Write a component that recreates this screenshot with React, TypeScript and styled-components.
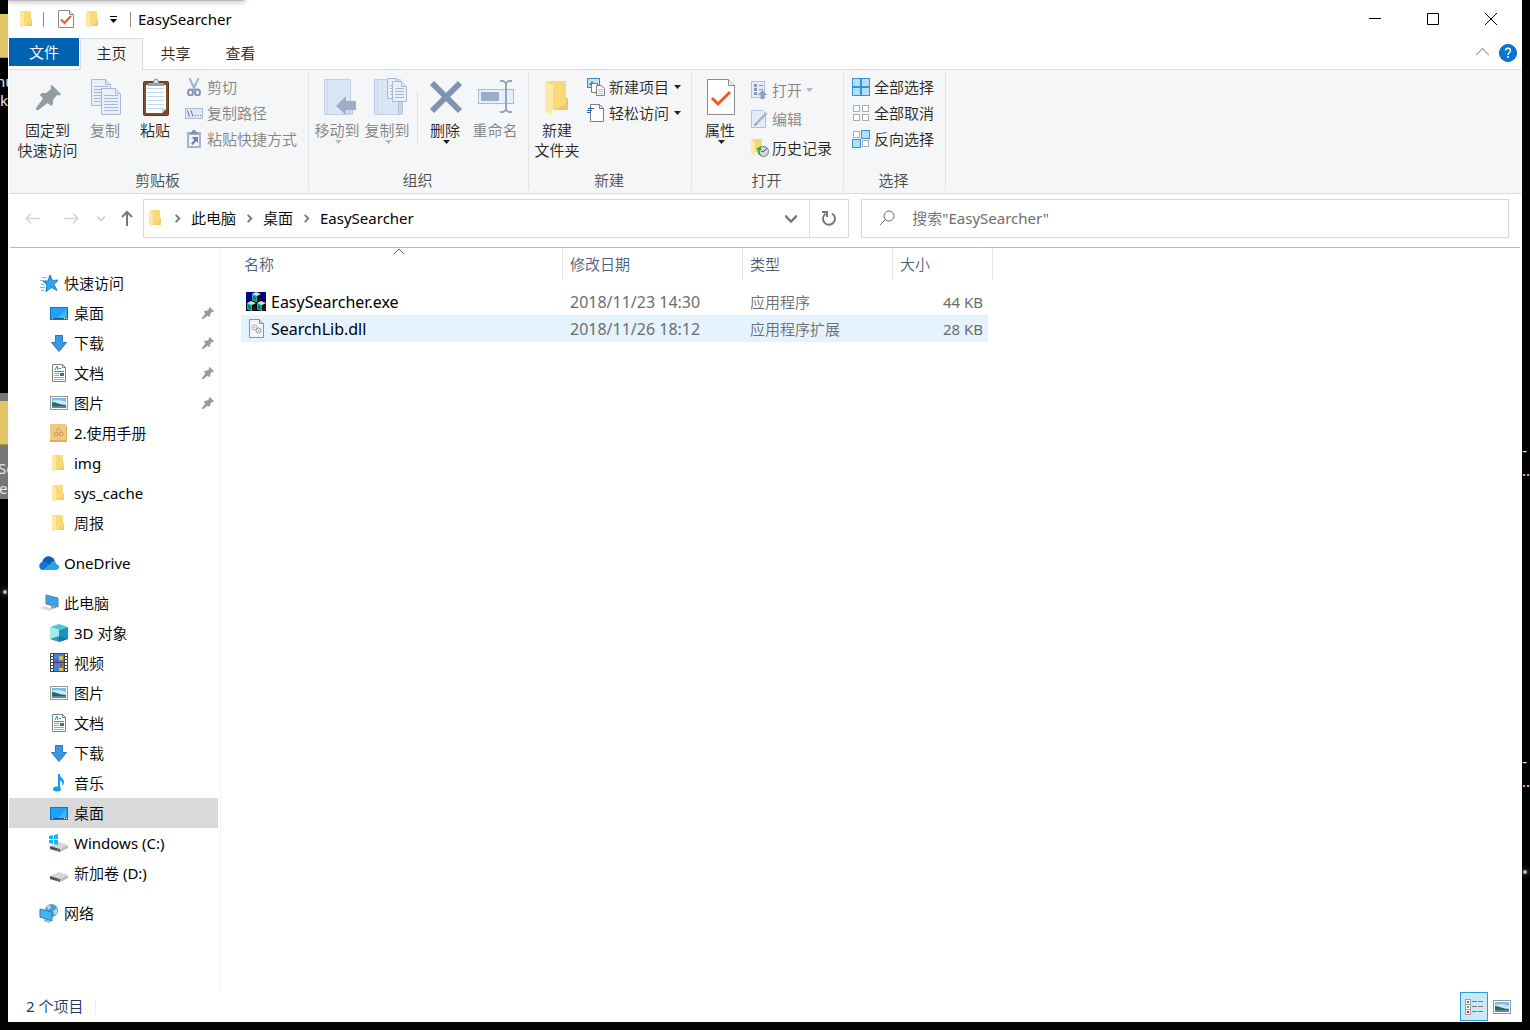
import React from "react";
import styled, { createGlobalStyle, css } from "styled-components";

const Global = createGlobalStyle`
  * { box-sizing: border-box; }
  body {
    margin: 0;
    background: #000;
    font-family: "Noto Sans", "Noto Sans CJK SC DemiLight", "Noto Sans CJK SC Light", "Noto Sans CJK SC", sans-serif;
    font-size: 15px;
    line-height: 20px;
    color: #000;
  }
  button, input { font: inherit; color: inherit; }
  button { border: 0; padding: 0; background: transparent; }
  svg { display: block; flex: none; }
`;

/* ---------- desktop ---------- */

const Desktop = styled.div`
  position: relative;
  display: flex;
  min-height: 100vh;
  padding: 0 8px 8px;
  overflow: hidden;
  background: #020203;
`;

const DesktopFolder = styled.div<{ $top: number; $height: number; $selected?: boolean }>`
  position: absolute;
  left: 0;
  top: ${(p) => p.$top}px;
  width: 40px;
  height: ${(p) => p.$height}px;
  padding-top: ${(p) => (p.$selected ? 8 : 0)}px;
  background: ${(p) => (p.$selected ? "#777" : "transparent")};
  &::before {
    content: "";
    display: block;
    height: 43px;
    background: #e3c467;
    border-bottom: 1px solid #b8983e;
  }
`;

const DesktopText = styled.span<{ $top: number; $side: "left" | "right"; $shift: number }>`
  position: absolute;
  top: ${(p) => p.$top}px;
  ${(p) => (p.$side === "left" ? `left: ${p.$shift}px;` : `right: ${p.$shift}px;`)}
  color: #e8e8e8;
`;

const Star = styled.i<{ $top: number; $side: "left" | "right" }>`
  position: absolute;
  ${(p) => p.$side}: 3px;
  top: ${(p) => p.$top}px;
  width: 4px;
  height: 4px;
  border-radius: 50%;
  background: #aeb8b4;
  box-shadow: 0 0 5px 1px #4d5a57;
`;

const Window = styled.main`
  position: relative;
  display: flex;
  flex-direction: column;
  flex: 1;
  min-width: 0;
  padding: 0 1px;
  background: #fff;
`;

/* ---------- title bar ---------- */

const TitleBar = styled.header`
  display: flex;
  justify-content: space-between;
  height: 38px;
  padding-right: 1px;
`;

const TopShade = styled.div`
  position: absolute;
  top: 0;
  left: 0;
  width: 236px;
  height: 1px;
  background: #bbb;
  box-shadow: 0 0 5px 1px #aaa;
  clip-path: inset(0 -6px -6px 0);
`;

const TitleLeft = styled.div`
  display: flex;
  align-items: center;
  gap: 11px;
  padding-left: 11px;
`;

const QuickTools = styled.div`
  display: flex;
  align-items: center;
  gap: 12px;
  padding: 0 2px 0 3px;
`;

const TitleRule = styled.span`
  width: 1px;
  height: 15px;
  background: #8c8c8c;
`;

const WindowTitle = styled.h1`
  margin: 0 0 0 -4px;
  font-size: 15px;
  font-weight: 400;
`;

const Caption = styled.button`
  display: inline-flex;
  align-items: center;
  justify-content: center;
  width: 58px;
  height: 38px;
`;

/* ---------- tabs ---------- */

const Tabs = styled.nav`
  display: flex;
  height: 32px;
  border-bottom: 1px solid #dadbdc;
  color: #262626;
`;

const FileTab = styled.button`
  width: 70px;
  height: 28px;
  margin-right: 1px;
  background: #0063b1;
  color: #fff;
`;

const Tab = styled.button<{ $active?: boolean }>`
  width: ${(p) => (p.$active ? 63 : 65)}px;
  height: 32px;
  padding-bottom: 3px;
  ${(p) =>
    p.$active &&
    css`
      background: #f5f6f7;
      border: 1px solid #dadbdc;
      border-bottom: 0;
    `}
`;

const TabTools = styled.div`
  display: flex;
  align-items: center;
  gap: 10px;
  margin-left: auto;
  padding: 0 4px 2px 0;
`;

/* ---------- ribbon ---------- */

const Ribbon = styled.section`
  display: flex;
  height: 124px;
  padding: 0 0 3px;
  background: #f5f6f7;
  border-bottom: 1px solid #dadbdc;
  color: #262626;
`;

const Group = styled.div<{ $left: number; $right: number }>`
  display: flex;
  flex-direction: column;
  justify-content: space-between;
  margin-top: 2px;
  border-right: 1px solid #e2e3e4;
  & > div {
    padding-left: ${(p) => p.$left}px;
    padding-right: ${(p) => p.$right}px;
  }
`;

const GroupBody = styled.div`
  display: flex;
  margin-top: -2px;
`;

const GroupName = styled.p`
  margin: 0;
  padding-right: 2px;
  text-align: center;
  color: #4c4c4c;
`;

const Big = styled.button<{ $w?: number }>`
  position: relative;
  display: flex;
  flex-direction: column;
  align-items: center;
  gap: 2px;
  width: ${(p) => p.$w ?? 50}px;
  padding-top: 8px;
  white-space: pre;
  &:disabled { color: #838383; }
`;

const BigArrow = styled.span`
  position: absolute;
  top: 70px;
  left: 23px;
  color: #222;
  button:disabled & { color: #b8b8b8; }
`;

const SmallCol = styled.div<{ $row?: number; $top?: number; $left?: number; $gap?: number }>`
  display: grid;
  grid-auto-rows: ${(p) => p.$row ?? 26}px;
  align-content: start;
  padding-top: ${(p) => p.$top ?? 4}px;
  padding-left: ${(p) => p.$left ?? 5}px;
  & > button { gap: ${(p) => p.$gap ?? 4}px; }
`;

const Small = styled.button`
  display: flex;
  align-items: center;
  white-space: nowrap;
  &:disabled { color: #838383; }
`;

const Arrow = styled.span`
  margin-left: 1px;
  color: #222;
  button:disabled & { color: #b8b8b8; }
`;

const InnerRule = styled.span`
  width: 1px;
  height: 54px;
  margin: 21px 2px 0 5px;
  background: #e2e3e4;
`;

/* ---------- address ---------- */

const AddressRow = styled.div`
  display: flex;
  align-items: center;
  height: 54px;
  padding: 0 11px 5px 0;
  border-bottom: 1px solid #b9b9b9;
  margin: 0 1px;
`;

const NavButtons = styled.div`
  display: flex;
  align-items: center;
  width: 133px;
  padding-left: 15px;
`;

const NavButton = styled.button<{ $before?: number }>`
  margin-left: ${(p) => p.$before ?? 0}px;
`;

const Box = styled.div<{ $grow: number }>`
  display: flex;
  align-items: center;
  flex: ${(p) => p.$grow} 1 0;
  min-width: 0;
  height: 39px;
  border: 1px solid #d9d9d9;
`;

const Crumbs = styled.div`
  display: flex;
  align-items: center;
  flex: 1;
  gap: 9px;
  padding-left: 5px;
  & > svg:first-child { margin-right: 3px; }
`;

const Crumb = styled.a`
  color: #000;
  text-decoration: none;
`;

const BoxButton = styled.button<{ $rule?: boolean }>`
  display: flex;
  align-items: center;
  justify-content: center;
  width: ${(p) => (p.$rule ? 39 : 36)}px;
  height: 37px;
  border-left: ${(p) => (p.$rule ? "1px solid #d9d9d9" : "0")};
`;

const SearchBox = styled(Box)`
  margin-left: 12px;
  gap: 16px;
  & > svg { margin-left: 16px; }
`;

const SearchInput = styled.input`
  flex: 1;
  min-width: 0;
  border: 0;
  padding: 0;
  outline: 0;
  background: transparent;
  &::placeholder { color: #6d6d6d; opacity: 1; }
`;

/* ---------- body ---------- */

const Body = styled.div`
  display: flex;
  flex: 1;
`;

const Side = styled.aside`
  display: flex;
  flex-direction: column;
  gap: 10px;
  width: 212px;
  padding: 20px 2px 0 0;
  border-right: 1px solid #f2f2f2;
`;

const Tree = styled.ul`
  margin: 0;
  padding: 0;
  list-style: none;
`;

const TreeLink = styled.a<{ $root?: boolean; $selected?: boolean }>`
  display: flex;
  align-items: center;
  gap: 5px;
  height: 30px;
  padding: 0 4px 0 ${(p) => (p.$root ? 30 : 40)}px;
  background: ${(p) => (p.$selected ? "#d9d9d9" : "transparent")};
  color: #000;
  text-decoration: none;
  & > span { flex: 1; }
`;

const Files = styled.section`
  flex: 1;
  padding-left: 20px;
`;

const Table = styled.table`
  display: block;
  text-align: left;
  color: #6d6d6d;
  thead, tbody { display: block; }
  tbody { padding-top: 8px; }
`;

const Row = styled.tr<{ $head?: boolean; $hot?: boolean }>`
  display: grid;
  grid-template-columns: 322px 180px 150px ${(p) => (p.$head ? 100 : 95)}px;
  width: max-content;
  height: ${(p) => (p.$head ? 32 : 27)}px;
  align-items: center;
  background: ${(p) => (p.$hot ? "#e5f3ff" : "transparent")};
`;

const Th = styled.th<{ $first?: boolean }>`
  position: relative;
  height: 32px;
  padding: 6px 0 0 ${(p) => (p.$first ? 3 : 7)}px;
  border-right: 1px solid #e5e5e5;
  font-weight: inherit;
  color: #4c607a;
`;

const SortMark = styled.span`
  position: absolute;
  top: -1px;
  left: 153px;
`;

const Td = styled.td<{ $right?: boolean; $wide?: boolean }>`
  padding: 0 5px 0 7px;
  font-size: ${(p) => (p.$wide ? 16 : 15)}px;
  text-align: ${(p) => (p.$right ? "right" : "left")};
`;

const NameTd = styled.td`
  display: flex;
  align-items: center;
  gap: 5px;
  padding: 0 0 0 5px;
  font-size: 16px;
  color: #000;
`;

const Status = styled.footer`
  display: flex;
  align-items: center;
  justify-content: space-between;
  height: 30px;
  padding: 0 5px 1px 17px;
  color: #1e395b;
`;

const Count = styled.span`
  margin-bottom: 2px;
  padding-right: 12px;
  border-right: 1px solid #f0f0f0;
  line-height: 16px;
`;

const Views = styled.div`
  display: flex;
`;

const ViewButton = styled.button<{ $on?: boolean }>`
  display: flex;
  align-items: center;
  justify-content: center;
  width: 28px;
  height: 29px;
  border: ${(p) => (p.$on ? "1px solid #26a0da" : "0")};
  background: ${(p) => (p.$on ? "#cbe8f6" : "transparent")};
`;

/* ---------- drawings ---------- */

type Size = { w: number; h: number; children: React.ReactNode; vb?: string };
const Svg = ({ w, h, vb, children }: Size) => (
  <svg width={w} height={h} viewBox={vb ?? `0 0 ${w} ${h}`} fill="none" aria-hidden="true">
    {children}
  </svg>
);

const folderShape = (
  <g>
    <path d="M2 0h9v8h1v7H3z" fill="#f9d978" />
    <path d="M11 8h1v7H5l6-4z" fill="#f3cd68" />
    <path d="M0 0l4 2v12l-1 3-3-2z" fill="#ffe8a2" />
  </g>
);

const Folder = () => <Svg w={12} h={17}>{folderShape}</Svg>;
const TreeFolder = () => <Svg w={20} h={20} vb="-3 -2 20 20">{folderShape}</Svg>;

const Caret = () => (
  <Svg w={7} h={4}><path d="M0 0h7L3.500 4z" fill="currentColor" /></Svg>
);

const Sheet = ({ w, h }: { w: number; h: number }) => (
  <Svg w={w} h={h}>
    <path d="M.5.500h11l4 4v13h-15z" fill="#fff" stroke="#8c8c8c" />
    <path d="M11.500.500v4h4" fill="#e8e8e8" stroke="#8c8c8c" />
    <path d="M3 9.500l3.500 3.500L13 6" stroke="#f0591a" strokeWidth="2" />
  </Svg>
);

const PinShape = <path d="M16 0L25 9 24 10.500 21 10 17 15 17 19 15.500 21 11.500 18 2.500 25 0 25 0 23 7 13.500 4 10 5.500 8 10 8 15 4 14.500 1z" fill="#929ca3" />;
const BigPin = () => <Svg w={40} h={40} vb="-8 -7 40 40">{PinShape}</Svg>;
const SmallPin = () => <Svg w={12} h={12} vb="0 0 25 25">{PinShape}</Svg>;

const page = (x: number, y: number, w = 19, h = 26) => (
  <g>
    <path d={`M${x + 0.5} ${y + 0.5}h${w - 5}l5 5v${h - 5}h-${w}z`} fill="#e8effa" stroke="#a9b9d4" />
    <path d={`M${x + w - 4.5} ${y + 0.5}v5h5`} fill="#dbe5f4" stroke="#a9b9d4" />
    {Array.from({ length: Math.floor((h - 8) / 3) }, (_, i) => (
      <path key={i} d={`M${x + 3} ${y + 7.5 + i * 3}h${w - 5}`} stroke="#a9b9d4" />
    ))}
  </g>
);

const CopyIcon = () => <Svg w={40} h={40}>{page(6, 1)}{page(16, 10)}</Svg>;

const PasteIcon = () => (
  <Svg w={40} h={40}>
    <rect x="8.500" y="3.500" width="25" height="34" rx="1" fill="#7b4f2e" stroke="#5d3719" />
    <path d="M11 7h20v24l-4 4H11z" fill="#fff" />
    <path d="M31 31h-4v4z" fill="#c9d2d8" />
    {[10, 14, 18, 22, 26, 30].map((y) => <path key={y} d={`M12 ${y}.5h17`} stroke="#b8dced" />)}
    <path d="M13 8V5h5c0-6 6-6 6 0h5v3z" fill="#9aa0a5" />
    <circle cx="21" cy="3.500" r="1.500" fill="#eee" />
  </Svg>
);

const CutIcon = () => (
  <Svg w={18} h={18}>
    <path d="M4.500 0l5.500 12M13.500 0L8 12" stroke="#a3b1ca" strokeWidth="2" />
    <ellipse cx="5.500" cy="14.500" rx="2.500" ry="3" stroke="#8496b8" strokeWidth="2" />
    <ellipse cx="12.500" cy="14.500" rx="2.500" ry="3" stroke="#8496b8" strokeWidth="2" />
  </Svg>
);

const PathIcon = () => (
  <Svg w={18} h={18}>
    <rect x=".5" y="4.500" width="17" height="10" fill="#dfe8f6" stroke="#a9b9d4" />
    <path d="M2.500 6.500l2 6M6 6.500l2 6" stroke="#5f7397" />
    <path d="M10 11.500h1M12.500 11.500h1M15 11.500h1" stroke="#5f7397" />
  </Svg>
);

const ShortcutIcon = () => (
  <Svg w={18} h={18}>
    <path d="M2 2h14v16H2z" fill="#a3b3d0" />
    <path d="M4 5h10v11H4z" fill="#eef3fb" />
    <path d="M5 4V2h2c0-3 4-3 4 0h2v2z" fill="#7e91b3" />
    <path d="M7 7h6v6l-2-2-3 4-2-1 3-4z" fill="#6c82a9" />
  </Svg>
);

const book = (
  <g>
    <path d="M7.500 1.500h26v35h-26z" fill="#dbe6f5" stroke="#c0cfe5" />
    <path d="M10.500 2v34" stroke="#c6d4e9" />
    <path d="M31.500 36V25l2-2h2v13z" fill="#cad8ec" stroke="#b3c4de" />
  </g>
);

const MoveIcon = () => (
  <Svg w={40} h={40}>{book}<path d="M19 28l10-10v5h10v9H29v5z" fill="#9cadca" /></Svg>
);
const CopyToIcon = () => <Svg w={40} h={40}>{book}{page(20, 0, 14, 20)}{page(25, 3, 14, 20)}</Svg>;

const DeleteIcon = () => (
  <Svg w={40} h={40}><path d="M7 5l28 28M35 5L7 33" stroke="#8093b5" strokeWidth="6" /></Svg>
);

const RenameIcon = () => (
  <Svg w={40} h={40}>
    <rect x="3.500" y="11.500" width="35" height="14" fill="#e6effc" stroke="#a9b9d4" />
    <path d="M6 14h18v9H6z" fill="#9cadca" />
    <path d="M25 3h3l3 2 3-2h3M25 34h3l3-2 3 2h3M31 4v29" stroke="#94a5c3" strokeWidth="2" />
  </Svg>
);

const BigFolder = () => (
  <Svg w={40} h={40}>
    <path d="M10 3h19v17h2v12H15z" fill="#f9d978" />
    <path d="M29 20h2v12H18l11-6z" fill="#f0c860" />
    <path d="M8 3l8 4v23l-2 7-6-3z" fill="#ffe9a8" />
    <path d="M16 30v5l-2 2z" fill="#fff7dc" />
  </Svg>
);

const NewItemIcon = () => (
  <Svg w={18} h={18}>
    <rect x=".5" y=".5" width="12" height="9" fill="#bfe0f2" stroke="#3f87ae" />
    <path d="M2 7l3-4 3 4z" fill="#3f7f6c" />
    <path d="M4.500 5.500h6v9h-6z" fill="#fff" stroke="#7c7c7c" />
    <path d="M9.500 7.500h5l3 3v7h-8z" fill="#fff" stroke="#7c7c7c" />
    <path d="M11 11.500h5M11 13.500h5M11 15.500h5" stroke="#e8aaa6" />
  </Svg>
);

const EasyIcon = () => (
  <Svg w={18} h={18}>
    <path d="M3.500.500h9l4 4v13h-13z" fill="#fff" stroke="#7c7c7c" />
    <path d="M12.500.500v4h4" stroke="#7c7c7c" />
    <path d="M1 4.500h6M0 6.500h5M-1 8.500h5" stroke="#1f5f9c" />
  </Svg>
);

const BigSheet = () => (
  <Svg w={40} h={40}>
    <path d="M7.500 1.500h21l6 6v29h-27z" fill="#fff" stroke="#8c8c8c" />
    <path d="M28.500 1.500v6h6" fill="#eee" stroke="#8c8c8c" />
    <path d="M12 20l6 6 12-12" stroke="#f0591a" strokeWidth="3" />
  </Svg>
);

const OpenIcon = () => (
  <Svg w={18} h={18}>
    <rect x=".5" y=".5" width="13" height="16" fill="#e4ecf8" stroke="#b1c0da" />
    <path d="M3 3h3v3H3zM3 7h3v3H3zM3 11h3v3H3z" fill="#8397ba" />
    <path d="M8 4.500h4M8 8.500h4" stroke="#8397ba" />
    <path d="M11.500 9l5 5h-3v4h-4v-4h-3z" fill="#8fa2c3" />
  </Svg>
);

const EditIcon = () => (
  <Svg w={18} h={18}>
    <path d="M.5.500h11l3 3v14H.500z" fill="#e4ecf8" stroke="#b1c0da" />
    <path d="M5 14L15.500 3" stroke="#a3b3d0" strokeWidth="2.500" />
    <path d="M3 16l1-3 2 2z" fill="#7488ac" />
  </Svg>
);

const HistoryIcon = () => (
  <Svg w={18} h={18}>
    <path d="M1 0h10v13H2z" fill="#f7d675" />
    <path d="M0 0l4 2v13l-1 2-3-2z" fill="#ffe9a8" />
    <circle cx="12.500" cy="12.500" r="5" fill="#d4d7d9" stroke="#777" />
    <path d="M12.500 12.500l3-3M12.500 12.500h-2" stroke="#444" />
    <path d="M11 17c-4-1-5-4-4-6l-2-1 5-3v5l-1-1c-1 2 0 4 2 6z" fill="#30a93a" />
  </Svg>
);

const GridIcon = ({ on }: { on: number[] }) => (
  <Svg w={18} h={18}>
    {[0, 1, 2, 3].map((i) => {
      const x = (i % 2) * 9;
      const y = Math.floor(i / 2) * 9;
      const lit = on.includes(i);
      return lit ? (
        <rect key={i} x={x + 0.5} y={y + 0.5} width="8" height="8" fill="#b5defb" stroke="#3393df" />
      ) : (
        <rect key={i} x={x + 1.5} y={y + 1.5} width="6" height="6" fill="#fff" stroke="#acacac" />
      );
    })}
  </Svg>
);

const ArrowIcon = ({ dir, color }: { dir: "left" | "right" | "up"; color: string }) => (
  <Svg w={16} h={16}>
    <path
      d={{ left: "M15 8.500H1M6 3.500L1 8.500l5 5", right: "M0 8.500h14M9 3.500l5 5-5 5", up: "M8 16V2M3 7l5-5 5 5" }[dir]}
      stroke={color}
      strokeWidth={dir === "up" ? 2 : 1.5}
    />
  </Svg>
);

const Chevron = ({ dir, color, size = 9, weight = 1 }: { dir: "down" | "right" | "up"; color: string; size?: number; weight?: number }) => (
  <Svg w={size} h={size} vb="0 0 10 10">
    <path
      d={{ down: "M0 3l5 5 5-5", right: "M3 1l4 4-4 4", up: "M0 7l5-5 5 5" }[dir]}
      stroke={color}
      strokeWidth={weight}
    />
  </Svg>
);

const RefreshIcon = () => (
  <Svg w={16} h={16}>
    <path d="M11 3.500A6 6 0 1 1 4.500 3.800" stroke="#777" strokeWidth="2" />
    <path d="M1 2h5v5" stroke="#777" strokeWidth="2" />
  </Svg>
);

const SearchIcon = () => (
  <Svg w={18} h={18}>
    <circle cx="11" cy="7" r="5" stroke="#6d6d6d" />
    <path d="M7.500 10.500L2 16" stroke="#6d6d6d" />
  </Svg>
);

const StarIcon = () => (
  <Svg w={20} h={20}>
    <path d="M11 2l2.500 5.500L19 7l-4 4.500 3 6-5.500-3L7 18.500 8 12 4 8h5z" fill="#2ea3f2" stroke="#1581d1" />
    <path d="M3 4.500h5M1 7.500h3M2 11.500h3M1 14.500h5M2 17.500h3" stroke="#6cc0f5" />
  </Svg>
);

const ScreenIcon = () => (
  <Svg w={20} h={20}>
    <rect x="1.500" y="4.500" width="17" height="12" fill="#1ea1fb" stroke="#1474bd" />
    <path d="M9 15L17 6v9z" fill="#45b4ff" />
    <path d="M2 15.500h16" stroke="#0d5f9f" /><path d="M3 15.500h1M15 15.500h1M17 15.500h1" stroke="#fff" />
  </Svg>
);

const DownIcon = () => (
  <Svg w={20} h={20}><path d="M6.500 2.500h7v7h4L10 18.500 2.500 9.500h4z" fill="#3b97e6" stroke="#2479c7" /></Svg>
);

const DocIcon = () => (
  <Svg w={20} h={20}>
    <path d="M3.500 1.500h10l3 3v14h-13z" fill="#fff" stroke="#808080" />
    <path d="M13.500 1.500v3h3" stroke="#808080" />
    <path d="M6 7l2-4 1 4M10 5.500h2M5 8.500h10" stroke="#268ccf" />
    <path d="M5 10.500h5M5 12.500h5M5 14.500h10M5 16.500h10" stroke="#a6a6a6" />
    <path d="M11 10h4v3h-4z" fill="#2674b0" />
  </Svg>
);

const PictureIcon = () => (
  <Svg w={20} h={20}>
    <rect x="1.500" y="3.500" width="17" height="13" fill="#fff" stroke="#979797" />
    <path d="M3 5h14v10H3z" fill="#79bdf0" />
    <path d="M3 8c5-2 9-1 14 1v3H3z" fill="#cde7f6" />
    <path d="M3 9c5 0 7 3 14 3v1H3z" fill="#31664f" /><path d="M3 13h14v2H3z" fill="#4e89b2" />
  </Svg>
);

const ManualIcon = () => (
  <Svg w={20} h={20}>
    <path d="M1 1h16l1 3v15H1z" fill="#e0af5c" /><path d="M1 1h16v16H1z" fill="#efca82" />
    <circle cx="7" cy="11" r="2" stroke="#cf933a" /><circle cx="12" cy="11" r="2" stroke="#cf933a" />
    <path d="M7 8c1-3 4-3 5 0" stroke="#cf933a" />
  </Svg>
);

const CloudIcon = () => (
  <Svg w={20} h={20}>
    <path d="M3 10c1-8 10-9 13-2l-7 6z" fill="#0a5fb4" />
    <path d="M4 17c-5 0-5-8 0-8 2-1 4 0 6 2l-4 6z" fill="#1176d4" />
    <path d="M4 17l8-7c2-3 5-2 5 1 4 0 4 6 0 6z" fill="#28a4ea" />
  </Svg>
);

const PcIcon = () => (
  <Svg w={20} h={20}>
    <path d="M7 2l12 3v9L7 11z" fill="#35a4f0" stroke="#6b7c8a" />
    <path d="M12 13v3l5-1v-1z" fill="#8d979e" /><path d="M1 15l4-2 9 3-4 2z" fill="#d5dadd" />
  </Svg>
);

const CubeIcon = () => (
  <Svg w={20} h={20}>
    <path d="M1 4l9-3 9 3-9 3z" fill="#4fc5d6" /><path d="M1 4l9 3v12l-9-3z" fill="#a5e7ea" />
    <path d="M19 4l-9 3v12l9-3z" fill="#1397c7" /><path d="M10 13l9 3-9 3-9-3z" fill="#176e94" opacity=".7" />
  </Svg>
);

const VideoIcon = () => (
  <Svg w={20} h={20}>
    <path d="M1 0h18v19H1z" fill="#444" />
    <path d="M5 1h10v8H5zM5 10h10v8H5z" fill="#4681df" />
    <path d="M10 3h4v4h-4zM10 15h4v3h-4z" fill="#e3bf2c" /><path d="M6 6h3v3H6zM11 11h3v2h-3z" fill="#cf3b2c" />
    <path d="M3 1v18M17 1v18" stroke="#fff" strokeWidth="2" strokeDasharray="2 1" />
  </Svg>
);

const MusicIcon = () => (
  <Svg w={20} h={20}>
    <path d="M9 1h2c0 4 4 4 4 8 0 2-1 3-2 4 1-3 0-5-2-5v8H9z" fill="#159cf0" />
    <ellipse cx="8" cy="16" rx="4" ry="2.500" fill="#159cf0" />
  </Svg>
);

const DriveIcon = ({ win }: { win?: boolean }) => (
  <Svg w={20} h={20}>
    <path d="M1 13l9-4 9 3-8 4z" fill="#d5d6d8" /><path d="M1 13l10 3v3L1 16z" fill="#4b4f53" />
    <path d="M11 16l8-4v3l-8 4z" fill="#b9bbbe" /><path d="M8 17h2" stroke="#54db6c" />
    {win && <path d="M0 3l4-1v4H0zM5 2l4-1v5H5zM0 7h4v4l-4-1zM5 7h4v5l-4-1z" fill="#13b7f2" />}
  </Svg>
);

const NetworkIcon = () => (
  <Svg w={20} h={20}>
    <circle cx="12.500" cy="7.500" r="6.500" fill="#4c9dc4" />
    <path d="M8 3c3-2 4 0 4 2l-3 2zM14 8l4-3v5l-3 2z" fill="#a8d7ea" />
    <path d="M1 6l12 3v9L1 14z" fill="#43b1f5" stroke="#2781b8" /><path d="M5 17l6 2" stroke="#a5aeb4" strokeWidth="2" />
  </Svg>
);

const mfcCube = (x: number, y: number) => (
  <g>
    <path d={`M${x} ${y + 2}l4-2 5 2v5l-4 3-5-2z`} fill="#dcdcdc" />
    <path d={`M${x} ${y + 2}l5 2v6l-5-2z`} fill="#00b8b8" />
    <path d={`M${x + 5} ${y + 4}l4-2v5l-4 3z`} fill="#111" />
    <path d={`M${x + 2} ${y + 4}v3h2`} stroke="#003c3c" />
  </g>
);

const ExeIcon = () => (
  <Svg w={20} h={20}>
    <path d="M0 0h20v19H0z" fill="#00008c" /><path d="M0 12l6-6h9l5 6v7H0z" fill="#000" />
    {mfcCube(6, 0)}{mfcCube(1, 9)}{mfcCube(11, 9)}
  </Svg>
);

const DllIcon = () => (
  <Svg w={20} h={20}>
    <path d="M3.500.500h10l4 4v14h-14z" fill="#f6f6f6" stroke="#919191" /><path d="M13.500.500v4h4" fill="#ddd" stroke="#919191" />
    <circle cx="8.500" cy="8.500" r="2.500" stroke="#a3adb6" />
    <circle cx="12.500" cy="11.500" r="2.500" stroke="#7599bb" /><path d="M8 8h1v1H8zM12 11h1v1h-1z" fill="#777" />
  </Svg>
);

const DetailsIcon = () => (
  <Svg w={18} h={18}>
    {[0, 1, 2].map((i) => (
      <g key={i}>
        <rect x=".5" y={1.5 + i * 5} width="5" height="5" fill="#fff" stroke="#9a9a9a" />
        <path d={`M2 ${3 + i * 5}h2v2H2z`} fill={["#397fab", "#b58a28", "#b52c28"][i]} />
        <path d={`M7 ${3.5 + i * 5}h5M13 ${3.5 + i * 5}h5`} stroke="#777" />
      </g>
    ))}
  </Svg>
);

/* ---------- data ---------- */

type Node = { label: string; icon: React.ReactNode; pinned?: boolean; selected?: boolean };
const trees: Node[][] = [
  [
    { label: "快速访问", icon: <StarIcon /> },
    { label: "桌面", icon: <ScreenIcon />, pinned: true },
    { label: "下载", icon: <DownIcon />, pinned: true },
    { label: "文档", icon: <DocIcon />, pinned: true },
    { label: "图片", icon: <PictureIcon />, pinned: true },
    { label: "2.使用手册", icon: <ManualIcon /> },
    { label: "img", icon: <TreeFolder /> },
    { label: "sys_cache", icon: <TreeFolder /> },
    { label: "周报", icon: <TreeFolder /> },
  ],
  [{ label: "OneDrive", icon: <CloudIcon /> }],
  [
    { label: "此电脑", icon: <PcIcon /> },
    { label: "3D 对象", icon: <CubeIcon /> },
    { label: "视频", icon: <VideoIcon /> },
    { label: "图片", icon: <PictureIcon /> },
    { label: "文档", icon: <DocIcon /> },
    { label: "下载", icon: <DownIcon /> },
    { label: "音乐", icon: <MusicIcon /> },
    { label: "桌面", icon: <ScreenIcon />, selected: true },
    { label: "Windows (C:)", icon: <DriveIcon win /> },
    { label: "新加卷 (D:)", icon: <DriveIcon /> },
  ],
  [{ label: "网络", icon: <NetworkIcon /> }],
];

const files = [
  { name: "EasySearcher.exe", icon: <ExeIcon />, date: "2018/11/23 14:30", type: "应用程序", size: "44 KB" },
  { name: "SearchLib.dll", icon: <DllIcon />, date: "2018/11/26 18:12", type: "应用程序扩展", size: "28 KB", hot: true },
];

const BigButton = ({ icon, label, w, off, menu }: { icon: React.ReactNode; label: string; w?: number; off?: boolean; menu?: boolean }) => (
  <Big $w={w} disabled={off}>
    {icon}
    <span>{label}</span>
    {menu && <BigArrow><Caret /></BigArrow>}
  </Big>
);

const SmallButton = ({ icon, label, off, menu }: { icon: React.ReactNode; label: string; off?: boolean; menu?: boolean }) => (
  <Small disabled={off}>
    {icon}
    <span>{label}</span>
    {menu && <Arrow><Caret /></Arrow>}
  </Small>
);

export default function App() {
  return (
    <Desktop>
      <Global />
      <DesktopFolder $top={14} $height={43} />
      <DesktopText $top={71} $side="left" $shift={-4}>nu</DesktopText>
      <DesktopText $top={90} $side="left" $shift={0}>k</DesktopText>
      <DesktopFolder $top={393} $height={106} $selected />
      <DesktopText $top={458} $side="left" $shift={-2}>Se</DesktopText>
      <DesktopText $top={478} $side="left" $shift={-1}>e</DesktopText>
      <DesktopText $top={440} $side="right" $shift={3}>-</DesktopText>
      <DesktopText $top={460} $side="right" $shift={-4}>...</DesktopText>
      <DesktopText $top={751} $side="right" $shift={3}>-</DesktopText>
      <DesktopText $top={771} $side="right" $shift={-4}>...</DesktopText>
      <Star $top={590} $side="left" />
      <Star $top={870} $side="right" />
      <Window>
        <TitleBar>
          <TopShade />
          <TitleLeft>
            <Folder />
            <TitleRule />
            <QuickTools>
              <Sheet w={16} h={18} />
              <Folder />
              <Svg w={7} h={7}><path d="M0 .5h7" stroke="#000" /><path d="M0 3h7L3.500 7z" fill="#000" /></Svg>
            </QuickTools>
            <TitleRule />
            <WindowTitle>EasySearcher</WindowTitle>
          </TitleLeft>
          <div>
            <Caption aria-label="最小化"><Svg w={12} h={12}><path d="M0 5.500h12" stroke="#000" /></Svg></Caption>
            <Caption aria-label="最大化"><Svg w={12} h={12}><path d="M.5.500h11v11H.500z" stroke="#000" /></Svg></Caption>
            <Caption aria-label="关闭"><Svg w={12} h={12}><path d="M0 0l12 12M12 0L0 12" stroke="#000" /></Svg></Caption>
          </div>
        </TitleBar>

        <Tabs>
          <FileTab>文件</FileTab>
          <Tab $active>主页</Tab>
          <Tab>共享</Tab>
          <Tab>查看</Tab>
          <TabTools>
            <button aria-label="折叠功能区"><Chevron dir="up" color="#a0a0a0" size={13} /></button>
            <button aria-label="帮助">
              <Svg w={18} h={18}>
                <circle cx="9" cy="9" r="8.500" fill="#0078d7" stroke="#175e9d" />
                <path d="M6.500 6.500c0-3 5-3 5 0 0 2-2.500 2-2.500 4.500M9 12v2" stroke="#fff" strokeWidth="1.500" />
              </Svg>
            </button>
          </TabTools>
        </Tabs>

        <Ribbon>
          <Group $left={6} $right={11}>
            <GroupBody>
              <BigButton icon={<BigPin />} label={"固定到\n快速访问"} w={65} />
              <BigButton icon={<CopyIcon />} label="复制" off />
              <BigButton icon={<PasteIcon />} label="粘贴" />
              <SmallCol>
                <SmallButton icon={<CutIcon />} label="剪切" off />
                <SmallButton icon={<PathIcon />} label="复制路径" off />
                <SmallButton icon={<ShortcutIcon />} label="粘贴快捷方式" off />
              </SmallCol>
            </GroupBody>
            <GroupName>剪贴板</GroupName>
          </Group>
          <Group $left={3} $right={8}>
            <GroupBody>
              <BigButton icon={<MoveIcon />} label="移动到" off menu />
              <BigButton icon={<CopyToIcon />} label="复制到" off menu />
              <InnerRule />
              <BigButton icon={<DeleteIcon />} label="删除" menu />
              <BigButton icon={<RenameIcon />} label="重命名" off />
            </GroupBody>
            <GroupName>组织</GroupName>
          </Group>
          <Group $left={3} $right={10}>
            <GroupBody>
              <BigButton icon={<BigFolder />} label={"新建\n文件夹"} />
              <SmallCol>
                <SmallButton icon={<NewItemIcon />} label="新建项目" menu />
                <SmallButton icon={<EasyIcon />} label="轻松访问" menu />
              </SmallCol>
            </GroupBody>
            <GroupName>新建</GroupName>
          </Group>
          <Group $left={3} $right={11}>
            <GroupBody>
              <BigButton icon={<BigSheet />} label="属性" menu />
              <SmallCol $row={29} $top={5} $left={6} $gap={3}>
                <SmallButton icon={<OpenIcon />} label="打开" off menu />
                <SmallButton icon={<EditIcon />} label="编辑" off />
                <SmallButton icon={<HistoryIcon />} label="历史记录" />
              </SmallCol>
            </GroupBody>
            <GroupName>打开</GroupName>
          </Group>
          <Group $left={3} $right={11}>
            <GroupBody>
              <SmallCol>
                <SmallButton icon={<GridIcon on={[0, 1, 2, 3]} />} label="全部选择" />
                <SmallButton icon={<GridIcon on={[]} />} label="全部取消" />
                <SmallButton icon={<GridIcon on={[1, 2]} />} label="反向选择" />
              </SmallCol>
            </GroupBody>
            <GroupName>选择</GroupName>
          </Group>
        </Ribbon>

        <AddressRow>
          <NavButtons>
            <NavButton aria-label="后退"><ArrowIcon dir="left" color="#d5d5d5" /></NavButton>
            <NavButton $before={23} aria-label="前进"><ArrowIcon dir="right" color="#d5d5d5" /></NavButton>
            <NavButton $before={17} aria-label="最近位置"><Chevron dir="down" color="#cfcfcf" size={8} weight={2} /></NavButton>
            <NavButton $before={14} aria-label="上移"><ArrowIcon dir="up" color="#777" /></NavButton>
          </NavButtons>
          <Box $grow={12}>
            <Crumbs>
              <Folder />
              <Chevron dir="right" color="#777" weight={2} />
              <Crumb href="#pc">此电脑</Crumb>
              <Chevron dir="right" color="#777" weight={2} />
              <Crumb href="#desktop">桌面</Crumb>
              <Chevron dir="right" color="#777" weight={2} />
              <Crumb href="#here">EasySearcher</Crumb>
            </Crumbs>
            <BoxButton aria-label="以前的位置"><Chevron dir="down" color="#777" size={12} weight={2} /></BoxButton>
            <BoxButton $rule aria-label="刷新"><RefreshIcon /></BoxButton>
          </Box>
          <SearchBox $grow={11}>
            <SearchIcon />
            <SearchInput type="text" aria-label="搜索" placeholder={'搜索"EasySearcher"'} />
          </SearchBox>
        </AddressRow>

        <Body>
          <Side>
            {trees.map((tree) => (
              <Tree key={tree[0].label}>
                {tree.map((n, i) => (
                  <li key={n.label}>
                    <TreeLink href="#" $root={i === 0} $selected={n.selected}>
                      {n.icon}
                      <span>{n.label}</span>
                      {n.pinned && <SmallPin />}
                    </TreeLink>
                  </li>
                ))}
              </Tree>
            ))}
          </Side>
          <Files>
            <Table>
              <thead>
                <Row $head>
                  <Th $first>
                    名称
                    <SortMark><Chevron dir="up" color="#666" size={10} /></SortMark>
                  </Th>
                  <Th>修改日期</Th>
                  <Th>类型</Th>
                  <Th>大小</Th>
                </Row>
              </thead>
              <tbody>
                {files.map((f) => (
                  <Row key={f.name} $hot={f.hot}>
                    <NameTd>{f.icon}{f.name}</NameTd>
                    <Td $wide>{f.date}</Td>
                    <Td>{f.type}</Td>
                    <Td $right>{f.size}</Td>
                  </Row>
                ))}
              </tbody>
            </Table>
          </Files>
        </Body>

        <Status>
          <Count>2 个项目</Count>
          <Views>
            <ViewButton $on aria-label="详细信息"><DetailsIcon /></ViewButton>
            <ViewButton aria-label="大图标"><PictureIcon /></ViewButton>
          </Views>
        </Status>
      </Window>
    </Desktop>
  );
}
